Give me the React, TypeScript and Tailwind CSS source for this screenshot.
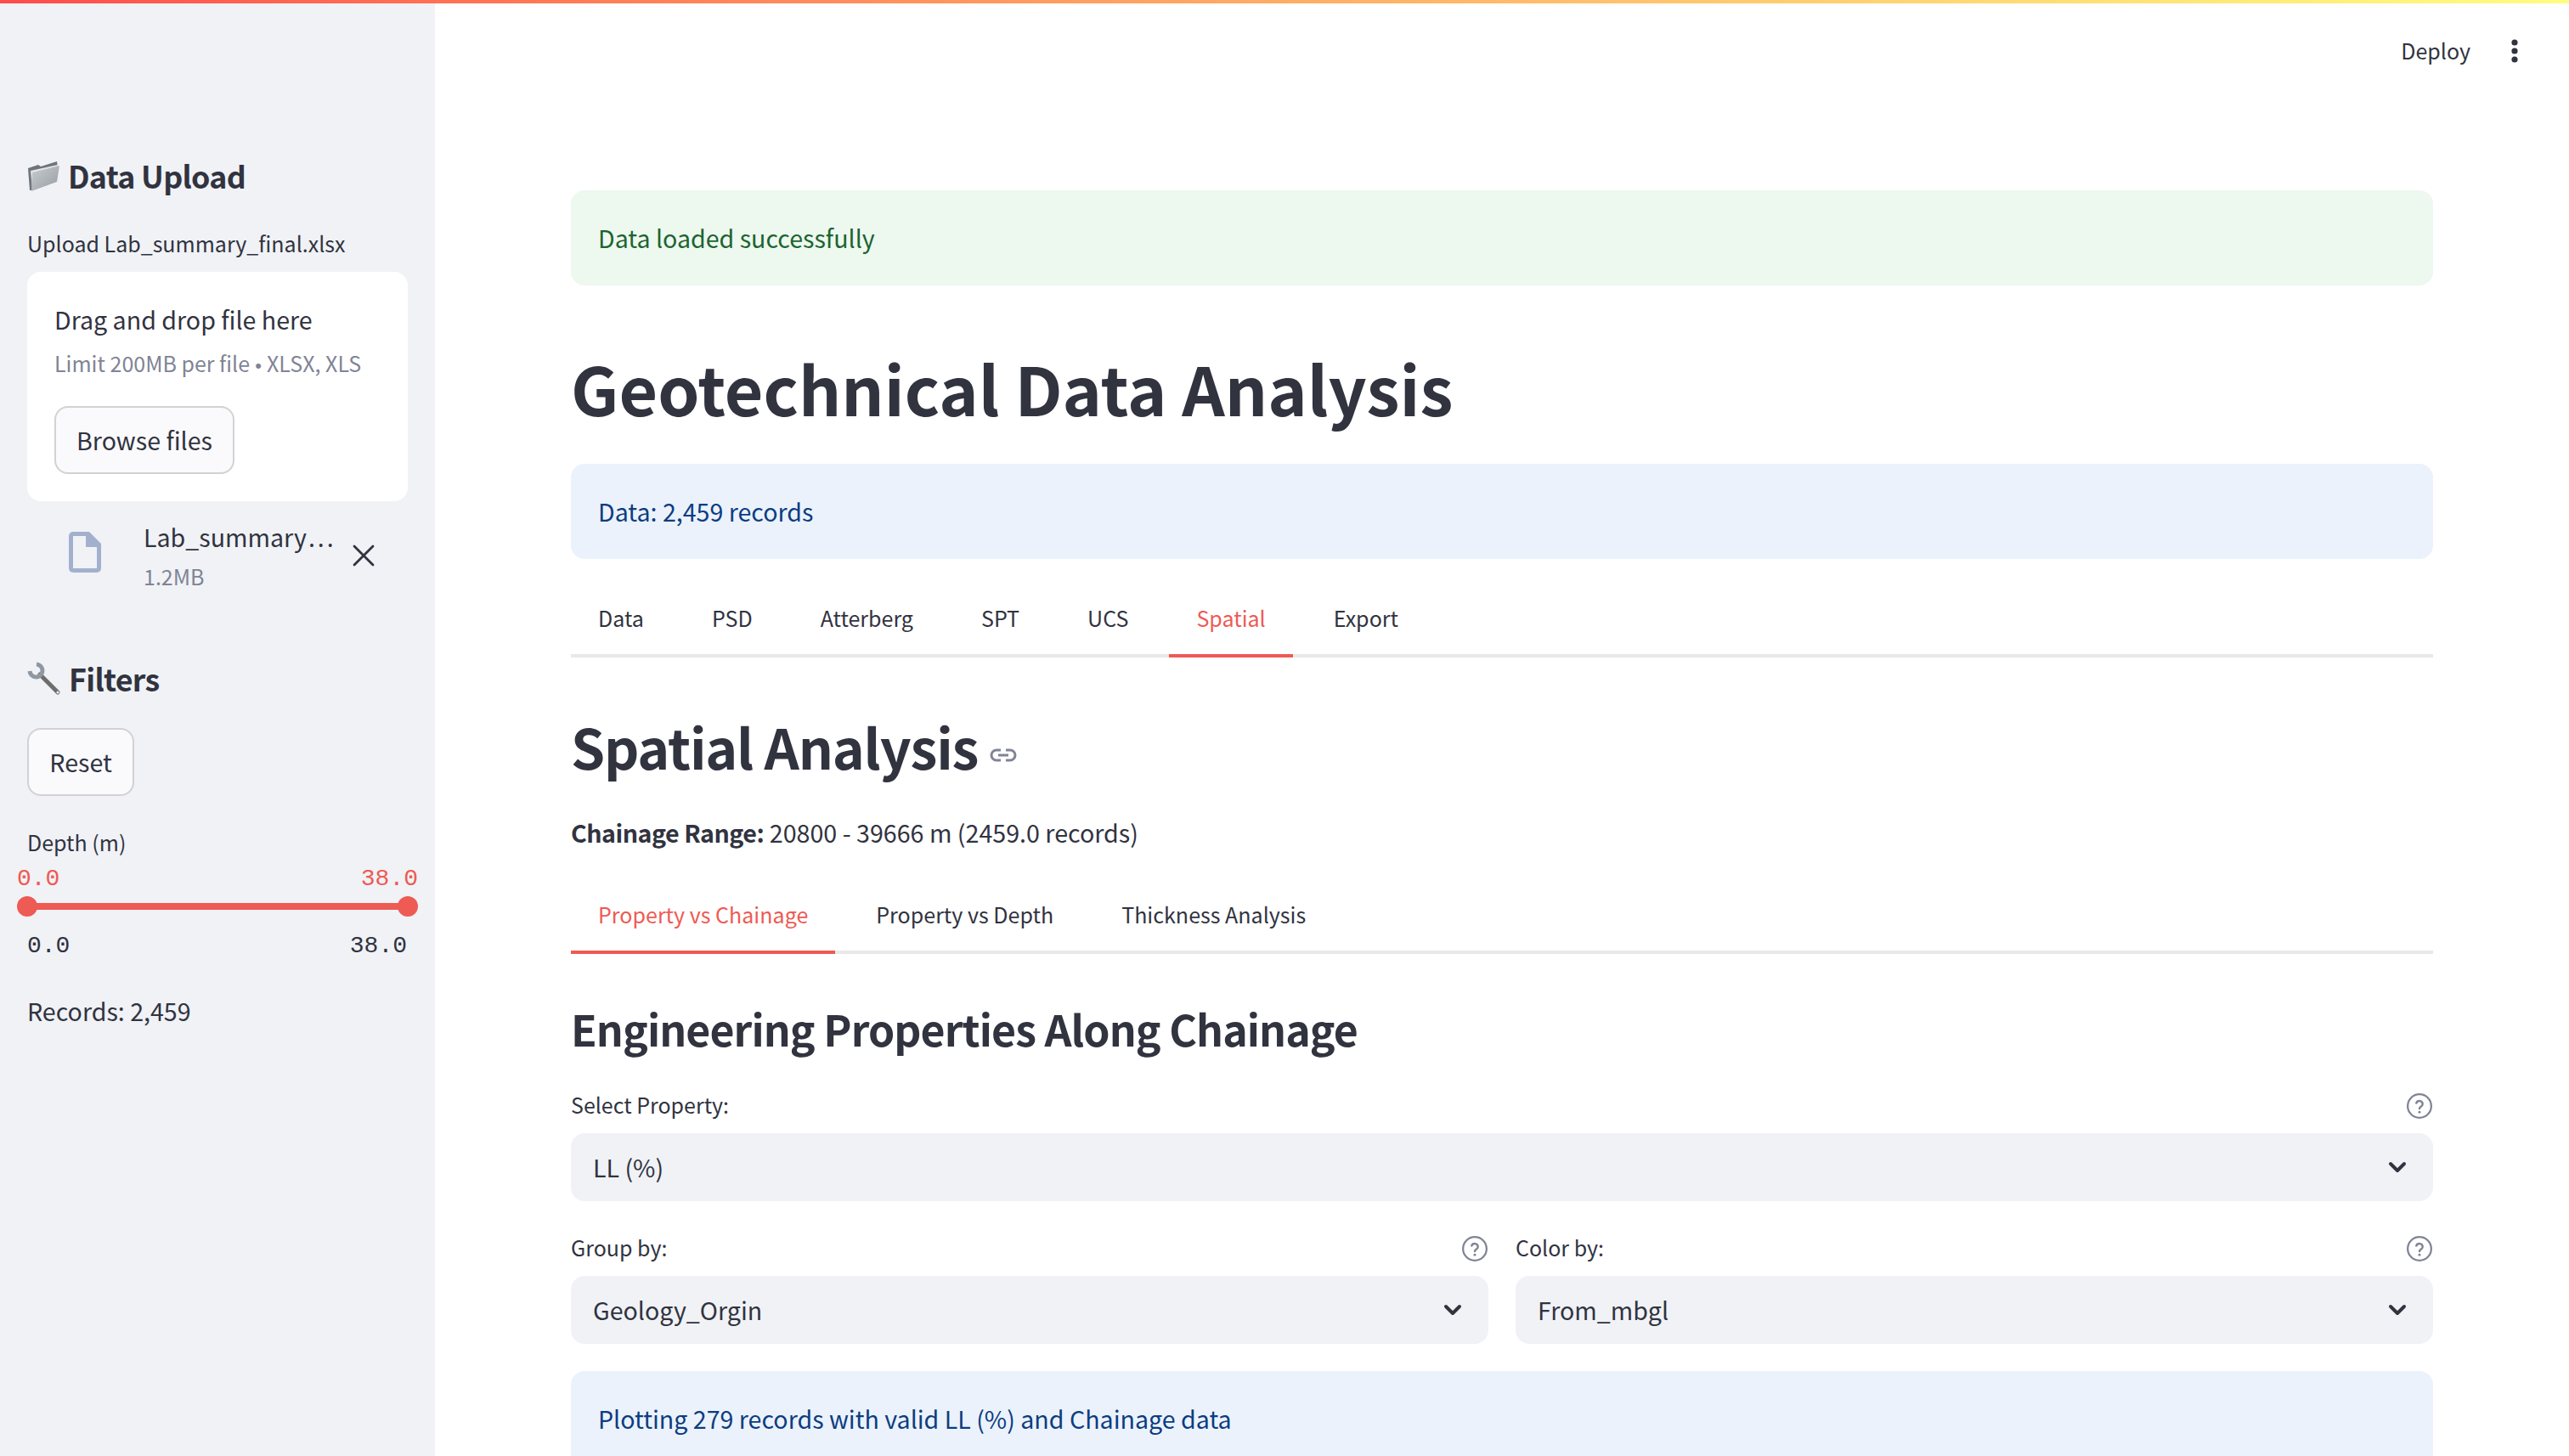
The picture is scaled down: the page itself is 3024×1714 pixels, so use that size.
import { ChevronDown, X } from "lucide-react";

const sans = "font-['Noto_Sans_CJK_SC','Liberation_Sans',sans-serif]";
const mono = "font-['Liberation_Mono',monospace]";

function HelpIcon() {
	return (
		<svg width="32" height="32" viewBox="0 0 24 24" fill="none" className="text-[#808495]">
			<circle cx="12" cy="12" r="10.4" stroke="currentColor" strokeWidth="1.7" />
			<path d="M9.2 9.4a2.9 2.9 0 0 1 5.6 1c0 1.9-2.8 2.3-2.8 3.8" stroke="currentColor" strokeWidth="1.8" strokeLinecap="round" />
			<circle cx="12" cy="17.4" r="1.1" fill="currentColor" />
		</svg>
	);
}

function FolderEmoji() {
	return (
		<svg width="37" height="36" viewBox="0 0 37 36" className="ml-px shrink-0">
			<defs>
				<linearGradient id="folderFront" x1="0" y1="0" x2="1" y2="1">
					<stop offset="0" stopColor="#c8ccd0" />
					<stop offset="1" stopColor="#979da3" />
				</linearGradient>
			</defs>
			<path d="M0 9 L12 5 L15 7 L34 1 L35 8 L4 35 L2 35 Z" fill="#6e757c" />
			<path d="M3 12 L35 5 L35 9 L5 33 Z" fill="#e4e6e8" />
			<path d="M5 14 L37 6 L34 25 L4 36 Z" fill="url(#folderFront)" />
		</svg>
	);
}

function WrenchEmoji() {
	return (
		<svg width="40" height="40" viewBox="0 0 40 40" fill="none" className="shrink-0">
			<path d="M15 15 L36 36" stroke="#6f6c6c" strokeWidth="5" strokeLinecap="round" />
			<path d="M11 3 A7.5 7.5 0 1 1 3 11" stroke="#8f98a2" strokeWidth="5" />
			<circle cx="36" cy="36" r="1.5" fill="#f0f2f6" />
		</svg>
	);
}

function Select({ value, className }: { value: string; className?: string }) {
	return (
		<div className={"h-20 rounded-2xl bg-[#f0f2f6] flex items-center justify-between pl-[26px] pr-[26px] " + (className ?? "")}>
			<span className="text-[28.6px] text-[#31333f]">{value}</span>
			<ChevronDown size={32} strokeWidth={3} className="text-[#31333f]" />
		</div>
	);
}

function Tab({ label, active }: { label: string; active?: boolean }) {
	return (
		<div
			className={
				"h-[88px] flex items-center px-8 border-b-4 -mb-1 text-[25.05px] whitespace-nowrap " +
				(active ? "text-[#ee5a54] border-[#ee5a54]" : "text-[#31333f] border-transparent")
			}
		>
			{label}
		</div>
	);
}

function FieldLabel({ label }: { label: string }) {
	return (
		<div className="flex items-center justify-between h-[40px]">
			<span className="text-[25px] leading-[36px] mb-1">{label}</span>
			<HelpIcon />
		</div>
	);
}

export default function App() {
	return (
		<div className={"relative w-[3024px] h-[1714px] overflow-hidden bg-white flex text-[#31333f] " + sans}>
			<div className="absolute top-0 left-0 right-0 h-1 bg-gradient-to-r from-[#ff4b4b] to-[#fffd80]" />

			<aside className="w-[512px] shrink-0 bg-[#f0f2f6] pt-[175px] px-8 flex flex-col">
				<div className="flex items-center gap-[10px] h-[64px]">
					<FolderEmoji />
					<span className="text-[35.8px] font-semibold tracking-[-0.7px]">Data Upload</span>
				</div>
				<div className="mt-[28px] text-[25px] leading-[38px]">Upload Lab_summary_final.xlsx</div>
				<div className="mt-[15px] bg-white rounded-2xl pl-8 pt-[36px] h-[270px] w-[448px]">
					<div className="text-[28.6px] leading-[40px]">Drag and drop file here</div>
					<div className="text-[25px] leading-[40px] mt-[11px] text-[#808495] whitespace-nowrap">
						Limit 200MB per file<span className="font-['Liberation_Sans',sans-serif] text-[22px]"> • </span>XLSX, XLS
					</div>
					<div className="mt-[27px] w-[212px] h-[80px] rounded-2xl border-2 border-[#d2d2d6] bg-[#fafafc] flex items-center justify-center text-[28.6px]">
						Browse files
					</div>
				</div>
				<div className="flex items-center mt-[22px] h-[84px]">
					<svg width="38" height="48" viewBox="0 0 38 48" className="ml-[49px] mb-2 shrink-0">
						<path d="M5 0 H24 L38 14 V43 a5 5 0 0 1 -5 5 H5 a5 5 0 0 1 -5 -5 V5 a5 5 0 0 1 5 -5 Z" fill="#a3b0cd" />
						<path d="M5 5 H20 V18 H33 V43 H5 Z" fill="#f0f2f6" />
					</svg>
					<div className="ml-[50px] w-[227px] shrink-0">
						<div className="text-[28.6px] leading-[40px] whitespace-nowrap">
							Lab_summary<span className="tracking-[3px] ml-[2px]">...</span>
						</div>
						<div className="mt-2 text-[25px] leading-[36px] text-[#808495]">1.2MB</div>
					</div>
					<X size={44} strokeWidth={1.5} className="ml-[10px] text-[#31333f]" />
				</div>

				<div className="flex items-center gap-[9px] mt-[71px] h-[64px]">
					<WrenchEmoji />
					<span className="text-[35.8px] font-semibold tracking-[-0.7px]">Filters</span>
				</div>
				<div className="mt-[26px] w-[126px] h-[80px] rounded-2xl border-2 border-[#d2d2d6] bg-[#fafafc] flex items-center justify-center text-[28.6px]">
					Reset
				</div>
				<div className="mt-[35px] text-[25px] leading-[38px]">Depth (m)</div>
				<div className={"relative h-[86px] w-[448px] " + mono}>
					<span className="absolute left-[-12px] top-[9px] text-[#ee5a54] text-[28px] leading-[32px]">0.0</span>
					<span className="absolute right-[-12px] top-[9px] text-[#ee5a54] text-[28px] leading-[32px]">38.0</span>
					<div className="absolute left-0 right-0 top-[53px] h-2 bg-[#ee5a54]" />
					<div className="absolute left-[-12px] top-[45px] size-6 rounded-full bg-[#ee5a54]" />
					<div className="absolute right-[-12px] top-[45px] size-6 rounded-full bg-[#ee5a54]" />
				</div>
				<div className={"flex justify-between w-[448px] pr-px pt-[2px] text-[28px] leading-[32px] " + mono}>
					<span>0.0</span>
					<span>38.0</span>
				</div>
				<div className="mt-[40px] text-[28.6px] leading-[40px]">Records: 2,459</div>
			</aside>

			<main className="flex-1 min-w-0 px-[160px] pt-[224px]">
				<div className="absolute top-[44px] right-[56px] flex items-center gap-[44px] h-8">
					<span className="text-[25px]">Deploy</span>
					<svg width="16" height="32" viewBox="0 0 16 32" fill="#31333f">
						<circle cx="8" cy="6" r="3.6" />
						<circle cx="8" cy="16" r="3.6" />
						<circle cx="8" cy="26" r="3.6" />
					</svg>
				</div>

				<div className="h-[112px] rounded-2xl bg-[#edf8ef] flex items-center px-8 text-[28.6px] text-[#1c6430]">Data loaded successfully</div>
				<h1 className="mt-[65px] text-[78.7px] leading-[110px] font-bold">Geotechnical Data Analysis</h1>
				<div className="mt-[35px] h-[112px] rounded-2xl bg-[#ebf2fc] flex items-center px-8 text-[28.6px] text-[#0c3d80]">Data: 2,459 records</div>

				<div className="mt-[28px] h-[88px] flex border-b-4 border-[#e8e8e8] gap-4">
					<Tab label="Data" />
					<Tab label="PSD" />
					<Tab label="Atterberg" />
					<Tab label="SPT" />
					<Tab label="UCS" />
					<Tab label="Spatial" active />
					<Tab label="Export" />
				</div>

				<div className="mt-[59px] flex items-center gap-[14px] h-[90px]">
					<h2 className="text-[64.4px] font-semibold tracking-[-1.2px]">Spatial Analysis</h2>
					<svg width="32" height="16" viewBox="0 0 32 16" fill="none" stroke="#808495" strokeWidth="3" className="mt-[22px]">
						<path d="M13 2H8a6 6 0 0 0 0 12h5M19 2h5a6 6 0 0 1 0 12h-5M10 8h12" />
					</svg>
				</div>
				<p className="mt-[33px] text-[28.65px] leading-[48px]">
					<b className="font-semibold tracking-[-0.5px]">Chainage Range:</b> 20800 - 39666 m (2459.0 records)
				</p>

				<div className="mt-[31px] h-[88px] flex border-b-4 border-[#e8e8e8] gap-4">
					<Tab label="Property vs Chainage" active />
					<Tab label="Property vs Depth" />
					<Tab label="Thickness Analysis" />
				</div>

				<h3 className="mt-[47px] text-[50px] leading-[80px] font-semibold tracking-[-0.92px]">Engineering Properties Along Chainage</h3>

				<div className="mt-[32px]">
					<FieldLabel label="Select Property:" />
					<Select value="LL (%)" className="mt-[12px]" />
				</div>

				<div className="mt-[36px] grid grid-cols-2 gap-8">
					<div>
						<FieldLabel label="Group by:" />
						<Select value="Geology_Orgin" className="mt-[12px]" />
					</div>
					<div>
						<FieldLabel label="Color by:" />
						<Select value="From_mbgl" className="mt-[12px]" />
					</div>
				</div>

				<div className="mt-[32px] h-[112px] rounded-2xl bg-[#ebf2fc] flex items-center px-8 text-[28.6px] text-[#0c3d80]">
					Plotting 279 records with valid LL (%) and Chainage data
				</div>
			</main>
		</div>
	);
}
